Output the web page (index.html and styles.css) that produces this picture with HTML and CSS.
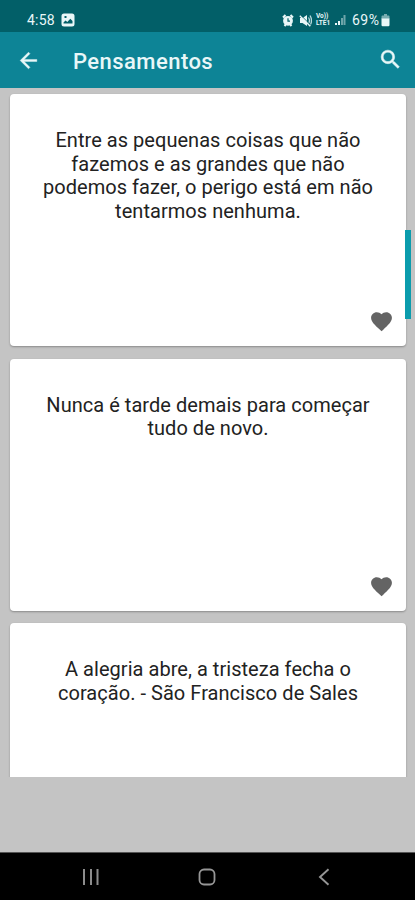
FILE: index.html
```html
<!DOCTYPE html>
<html lang="pt">

<head>
    <meta charset="UTF-8">
    <meta name="viewport" content="width=device-width, initial-scale=1.0">
    <title>Pensamentos</title>
    <link rel="stylesheet" href="styles.css">
</head>

<body>
    <div class="screen">
        <div class="status-bar">
            <span class="time">4:58</span>
            <svg class="picture" width="14" height="14" viewBox="0 0 14 14">
                <path fill="#e9f7f8" fill-rule="evenodd" d="M3 .5h8A2.5 2.5 0 0 1 13.500 3v8a2.500 2.500 0 0 1-2.500 2.500H3A2.500 2.500 0 0 1 .500 11V3A2.500 2.500 0 0 1 3 .500zM2.500 10.500h9V8L9.300 5.800 6.300 9 4.500 7.500l-2 2zM3.500 3v2h2V3z" />
            </svg>
            <div class="status-icons">
                <!-- alarm -->
                <svg width="12" height="13" viewBox="0 0 12 13">
                    <path d="M1 3.500L3.500 1M11 3.500L8.500 1M2.500 12l1.300-1.500M9.500 12l-1.300-1.500" stroke="#e9f7f8" stroke-width="2" />
                    <circle cx="6" cy="6.800" r="4.900" fill="#e9f7f8" />
                    <path d="M6 4.200v3h2" fill="none" stroke="#025f68" stroke-width="1.200" />
                </svg>
                <!-- muted speaker -->
                <svg class="mute" width="13" height="13" viewBox="0 0 13 13">
                    <path d="M1 4h2.500L8 1v11L3.500 9H1z" fill="#e9f7f8" />
                    <path d="M9.500 3.500q2 3 0 6M11 1.500q3 5 0 10" fill="none" stroke="#b9d9dc" stroke-width="1.300" />
                    <path d="M1.500 1l10.500 10.500" stroke="#025f68" />
                    <path d="M0.800 1.800l10.500 10.500" stroke="#e9f7f8" stroke-width="1.300" />
                </svg>
                <div class="volte"><span>Vo))</span><span>LTE1</span></div>
                <!-- signal -->
                <svg class="signal" width="11" height="12" viewBox="0 0 11 12">
                    <path d="M0 9h2v2H0zM3 7h2v4H3z" fill="#e9f7f8" />
                    <path d="M6 4h2v7H6zM8.500 1h2v10h-2z" fill="#6ea5aa" />
                </svg>
                <span class="percent">69%</span>
                <!-- battery -->
                <svg width="9" height="13" viewBox="0 0 9 13">
                    <path d="M3 0h3v1.500h1.500a1 1 0 0 1 1 1V5H.500V2.500a1 1 0 0 1 1-1H3z" fill="#78adb1" />
                    <path d="M.500 4.500h8V11a1.200 1.200 0 0 1-1.200 1.200H1.700A1.200 1.200 0 0 1 .500 11z" fill="#e9f7f8" />
                </svg>
            </div>
        </div>

        <header class="toolbar">
            <svg class="back" width="25" height="25" viewBox="0 0 24 24">
                <path fill="#e9f7f8" stroke="#e9f7f8" stroke-width="0.400" d="M20 11H7.830l5.590-5.590L12 4l-8 8 8 8 1.410-1.410L7.830 13H20v-2z" />
            </svg>
            <h1>Pensamentos</h1>
            <svg class="search" width="25" height="25" viewBox="0 0 24 24">
                <path fill="#e9f7f8" stroke="#e9f7f8" stroke-width="0.500" d="M15.500 14h-.790l-.280-.270A6.471 6.471 0 0 0 16 9.500 6.500 6.500 0 1 0 9.500 16c1.610 0 3.090-.590 4.230-1.570l.270.280v.790l5 4.990L20.490 19l-4.990-5zm-6 0C7.010 14 5 11.990 5 9.500S7.010 5 9.500 5 14 7.010 14 9.500 11.990 14 9.500 14z" />
            </svg>
        </header>

        <main class="list">
            <article class="card">
                <p>Entre as pequenas coisas que não<br>fazemos e as grandes que não<br>podemos fazer, o perigo está em não<br>tentarmos nenhuma.</p>
                <svg class="heart" width="25" height="25" viewBox="0 0 24 24">
                    <path fill="#646464" d="M12 21.350l-1.450-1.320C5.400 15.360 2 12.280 2 8.500 2 5.420 4.420 3 7.500 3c1.740 0 3.410.810 4.500 2.090C13.090 3.810 14.760 3 16.500 3 19.580 3 22 5.420 22 8.500c0 3.780-3.400 6.860-8.550 11.540L12 21.350z" />
                </svg>
            </article>
            <article class="card">
                <p>Nunca é tarde demais para começar<br>tudo de novo.</p>
                <svg class="heart" width="25" height="25" viewBox="0 0 24 24">
                    <path fill="#646464" d="M12 21.350l-1.450-1.320C5.400 15.360 2 12.280 2 8.500 2 5.420 4.420 3 7.500 3c1.740 0 3.410.810 4.500 2.090C13.090 3.810 14.760 3 16.500 3 19.580 3 22 5.420 22 8.500c0 3.780-3.400 6.860-8.550 11.540L12 21.350z" />
                </svg>
            </article>
            <article class="card">
                <p>A alegria abre, a tristeza fecha o<br>coração. - São Francisco de Sales</p>
            </article>
            <div class="scroll-thumb"></div>
        </main>

        <nav class="nav-bar">
            <svg width="18" height="18" viewBox="0 0 18 18">
                <path d="M2 1v16M9 1v16M15.500 1v16" stroke="#8c8c8c" stroke-width="2" />
            </svg>
            <svg width="18" height="18" viewBox="0 0 18 18">
                <rect x="1.500" y="1.500" width="15" height="15" rx="4.500" fill="none" stroke="#969696" stroke-width="1.800" />
            </svg>
            <svg width="18" height="18" viewBox="0 0 18 18">
                <path d="M13.500 1.200L5 9l8.500 7.800" fill="none" stroke="#969696" stroke-width="1.900" />
            </svg>
        </nav>
    </div>
</body>

</html>
```

FILE: styles.css
```css
body {
    margin: 0;
    font-family: Roboto, "Noto Sans", sans-serif;
    background-color: #c4c4c4;
}

svg {
    display: block;
    flex-shrink: 0;
}

.screen {
    display: flex;
    flex-direction: column;
    width: 415px;
    height: 900px;
    overflow: hidden;
}

.status-bar {
    display: flex;
    align-items: center;
    height: 32px;
    padding: 8px 25px 0 27px;
    box-sizing: border-box;
    background-color: #025f68;
    color: #e9f7f8;
    font-size: 14px;
    font-weight: 500;
}

.time {
    font-weight: 400;
    letter-spacing: 0.2px;
}

.picture {
    margin-left: 6px;
}

.status-icons {
    display: flex;
    align-items: center;
    margin-left: auto;
}

.mute {
    margin-left: 5px;
}

.volte {
    display: flex;
    flex-direction: column;
    width: 15px;
    margin-left: 4px;
    font-size: 6.500px;
    line-height: 7px;
    font-weight: bold;
}

.signal {
    margin-left: 4px;
}

.percent {
    margin: 0 1.500px 0 6px;
    font-weight: 400;
    letter-spacing: 0.5px;
}

.toolbar {
    display: flex;
    align-items: center;
    height: 56px;
    padding: 0 12px 0 16px;
    box-sizing: border-box;
    background-color: #0d8496;
    color: #e9f7f8;
}

.toolbar h1 {
    margin: 2px 0 0 32px;
    font-size: 22px;
    font-weight: 500;
    letter-spacing: 0.45px;
}

.search {
    margin-left: auto;
    margin-bottom: 2px;
}

.list {
    position: relative;
    height: 689px;
    padding: 6px 9px 0 10px;
    box-sizing: border-box;
    overflow: hidden;
}

.card {
    display: flex;
    flex-direction: column;
    height: 252px;
    margin-bottom: 12.500px;
    padding: 35px 12px 12px;
    box-sizing: border-box;
    border-radius: 4px;
    background-color: #fff;
    box-shadow: 0 1px 2px rgba(0, 0, 0, 0.3);
}

.card p {
    margin: 0;
    color: #222;
    font-size: 20px;
    line-height: 23.500px;
    letter-spacing: 0.04px;
    text-align: center;
    white-space: nowrap;
}

.heart {
    margin: auto 0 0 auto;
}

.scroll-thumb {
    position: absolute;
    top: 142px;
    right: 4px;
    width: 6px;
    height: 89px;
    background-color: #0b9cad;
}

.nav-bar {
    display: flex;
    align-items: center;
    justify-content: center;
    gap: 98.500px;
    height: 48px;
    margin-top: auto;
    padding-right: 1px;
    border-top: 1px solid #555;
    box-sizing: border-box;
    background-color: #000;
}
```
